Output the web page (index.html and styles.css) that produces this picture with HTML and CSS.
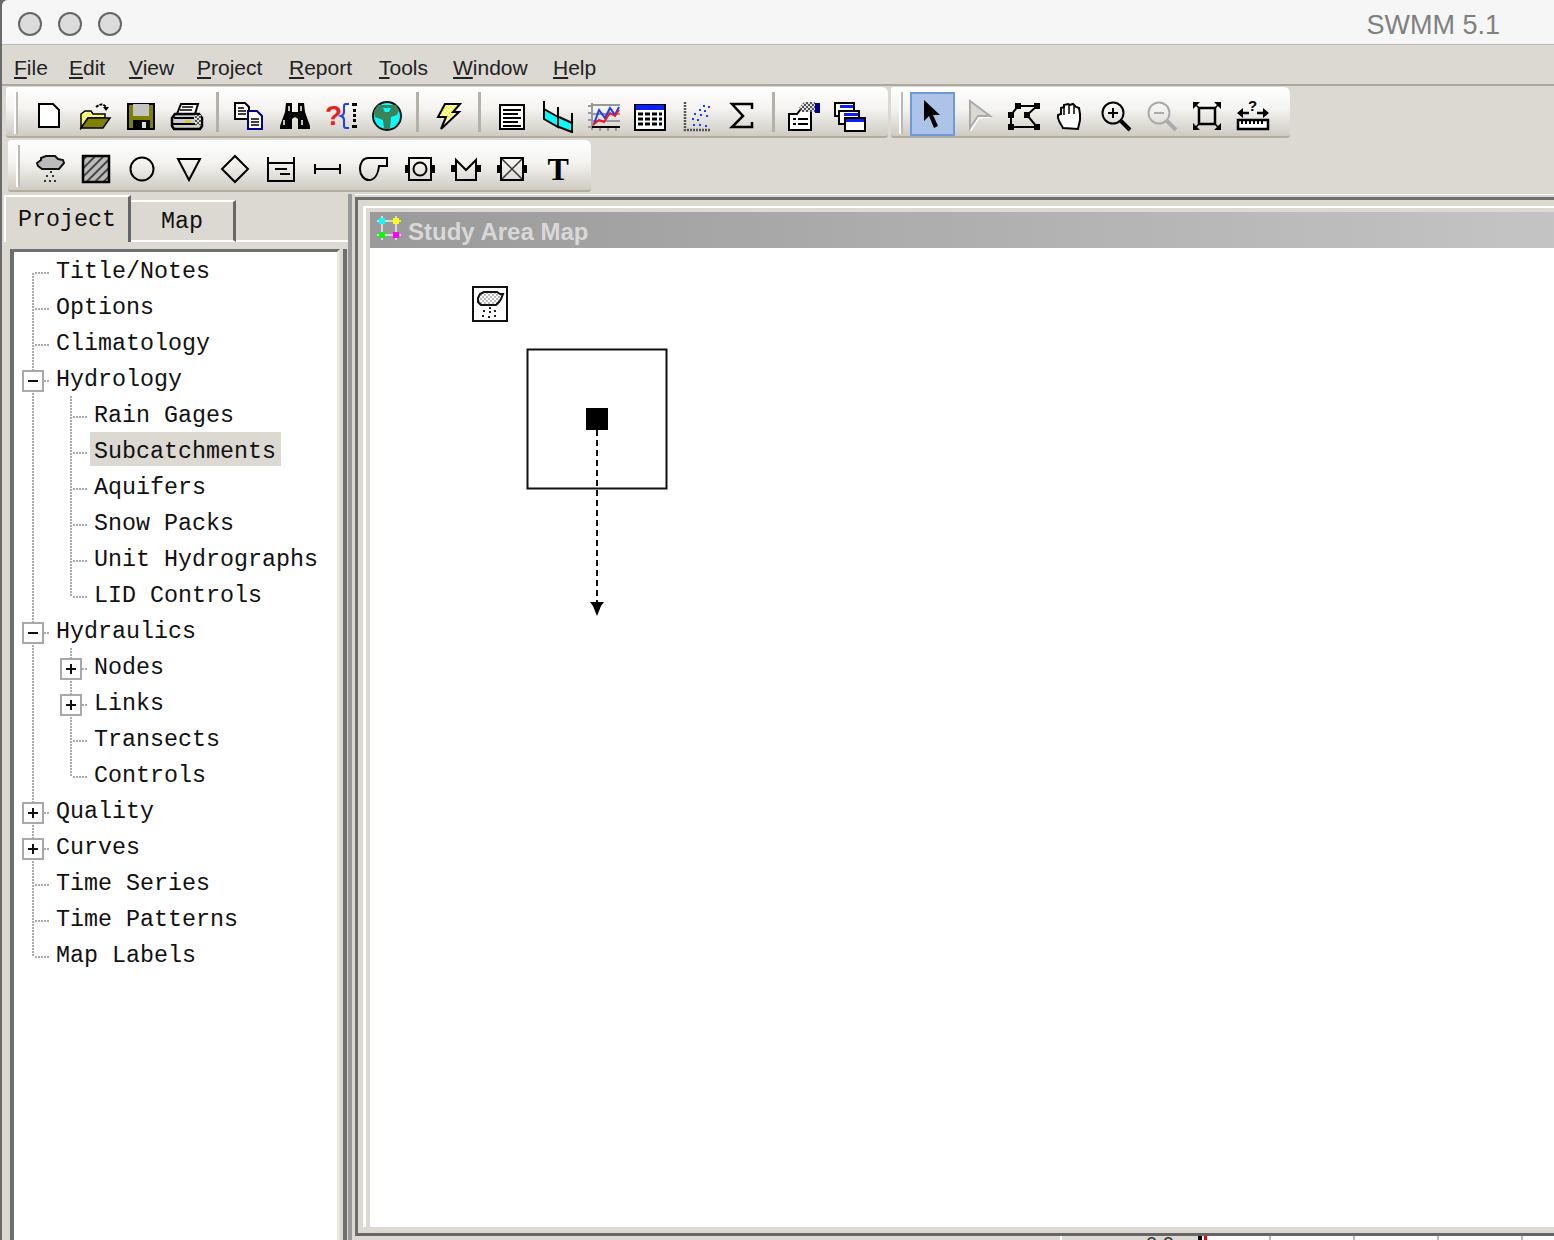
FILE: index.html
```html
<!DOCTYPE html>
<html lang="en">
<head>
  <meta charset="UTF-8" />
  <title>SWMM 5.1</title>
  <link rel="stylesheet" href="styles.css">
</head>
<body>
  <svg class="defs" width="0" height="0">
    <defs>
      <pattern id="dither-yellow" width="4" height="4" patternUnits="userSpaceOnUse">
        <rect width="4" height="4" fill="#fff"/><rect width="2" height="2" fill="#ff0"/><rect x="2" y="2" width="2" height="2" fill="#ff0"/>
      </pattern>
      <pattern id="dither-land" width="4" height="4" patternUnits="userSpaceOnUse">
        <rect width="4" height="4" fill="#12a050"/><rect width="2" height="2" fill="#666"/><rect x="2" y="2" width="2" height="2" fill="#666"/>
      </pattern>
      <pattern id="dither-gray" width="4" height="4" patternUnits="userSpaceOnUse">
        <rect width="4" height="4" fill="#ddd"/><rect width="2" height="2" fill="#555"/><rect x="2" y="2" width="2" height="2" fill="#555"/>
      </pattern>
      <pattern id="hatch" width="6" height="6" patternUnits="userSpaceOnUse" patternTransform="rotate(-45)">
        <rect width="6" height="6" fill="#bbb"/><rect width="6" height="2" fill="#444"/>
      </pattern>
      <pattern id="dots-light" width="4" height="4" patternUnits="userSpaceOnUse">
        <rect width="4" height="4" fill="#fff"/><rect width="2" height="2" fill="#bbb"/><rect x="2" y="2" width="2" height="2" fill="#bbb"/>
      </pattern>
    </defs>
  </svg>

  <div id="window">
    <div class="titlebar">
      <div class="lights">
        <span class="light"></span><span class="light"></span><span class="light"></span>
      </div>
      <div class="app-name">SWMM 5.1</div>
    </div>

    <div class="menubar">
      <span><u>F</u>ile</span>
      <span><u>E</u>dit</span>
      <span><u>V</u>iew</span>
      <span><u>P</u>roject</span>
      <span><u>R</u>eport</span>
      <span><u>T</u>ools</span>
      <span><u>W</u>indow</span>
      <span><u>H</u>elp</span>
    </div>

    <div class="toolbars">
      <div class="toolrow">
        <div class="toolbar">
          <span class="grip"></span>
          <span class="btn"><svg class="ico" viewBox="0 0 32 32"><path d="M7 4h14l6 6v17H7z" fill="#fff" stroke="#000" stroke-width="2"/></svg></span>
          <span class="btn"><svg class="ico" viewBox="0 0 32 32"><path d="M2 28V14l4-3h6l2 3h12v4H9z" fill="url(#dither-yellow)" stroke="#000" stroke-width="1.5"/><path d="M2 28l7-10h22l-7 10z" fill="#808000" stroke="#000" stroke-width="1.5"/><path d="M17 7q6-5 10 0" fill="none" stroke="#000" stroke-width="2" stroke-dasharray="3 1"/><path d="M24 7h6l-3 4z"/></svg></span>
          <span class="btn"><svg class="ico" viewBox="0 0 32 32"><rect x="3" y="4" width="26" height="25" fill="#808000" stroke="#000" stroke-width="2"/><rect x="8" y="4" width="16" height="12" fill="#c4c4c4"/><rect x="8" y="20" width="17" height="9" fill="#000"/><rect x="17" y="22" width="4" height="6" fill="#ddd"/></svg></span>
          <span class="btn"><svg class="ico" viewBox="0 0 32 32"><path d="M10 4h17l-3 10H6z" fill="#fff" stroke="#000" stroke-width="2"/><path d="M11 7h11M9 10h12" stroke="#000" stroke-width="1.5"/><path d="M4 14h24l3 4v8l-2 3H3l-2-3v-8z" fill="#ccc" stroke="#000" stroke-width="2.5"/><path d="M2 24h28M3 18h20" stroke="#000" stroke-width="2"/><rect x="14" y="20.5" width="6" height="2.5" fill="#e8c800"/><rect x="24" y="15" width="6" height="10" fill="url(#dither-gray)"/></svg></span>
          <span class="sep"></span>
          <span class="btn"><svg class="ico" viewBox="0 0 32 32"><path d="M3 3h10l4 4v12H3z" fill="#fff" stroke="#000" stroke-width="2"/><path d="M6 8h6M6 11h8M6 14h8" stroke="#000" stroke-width="1.5"/><path d="M16 11h9l5 5v13H16z" fill="#fff" stroke="#00008b" stroke-width="2"/><path d="M19 19h8M19 22h8M19 25h8" stroke="#000" stroke-width="1.5"/></svg></span>
          <span class="btn"><svg class="ico" viewBox="0 0 32 32"><path d="M7 3h6v9h6V3h6l1 9 5 14v3H19V19l-3-2-3 2v10H1v-3l5-14z"/><path d="M5 20v5M23 20v5M10 6v5M22 6v5" stroke="#fff" stroke-width="1.5"/></svg></span>
          <span class="btn"><svg class="ico" viewBox="0 0 32 32"><text class="ico-q" x="0" y="25">?</text><path d="M24 4h-3q-2 0-2 2v6q0 3-3 4 3 1 3 4v6q0 2 2 2h3" fill="none" stroke="#1a3cff" stroke-width="2"/><path d="M27 3h5v3h-5zM28 9h3v3h-3zM28 14h3v3h-3zM28 19h3v3h-3zM27 25h5v3h-5z"/></svg></span>
          <span class="btn"><svg class="ico" viewBox="0 0 32 32"><circle cx="16" cy="16" r="14" fill="#0ff" stroke="#111" stroke-width="2"/><path d="M7 5h18l3 5-2 5-6 2-1 12h-6l-1-9-8-3-1-6z" fill="url(#dither-land)"/><path d="M12 8h8l-2 4h-4z" fill="#0ff"/></svg></span>
          <span class="sep"></span>
          <span class="btn"><svg class="ico" viewBox="0 0 32 32"><path d="M13 4h15l-7 8h6L9 29l5-12H6z" fill="url(#dither-yellow)" stroke="#000" stroke-width="2"/></svg></span>
          <span class="sep sep-wide"></span>
          <span class="btn"><svg class="ico" viewBox="0 0 32 32"><rect x="5" y="5" width="24" height="24" fill="#fff" stroke="#000" stroke-width="2"/><path d="M8 10h18M8 14h15M8 18h18M8 22h15M8 26h18" stroke="#000" stroke-width="2"/></svg></span>
          <span class="btn"><svg class="ico" viewBox="0 0 32 32"><path d="M2 9v10l14 8V17zM17 17v10l13 6V23z" fill="#0ff"/><path d="M2 1v18l14 8V17L2 9M16 7v20M17 17l13 6M17 27l13 5M30 13v20" fill="none" stroke="#000" stroke-width="2"/></svg></span>
          <span class="btn"><svg class="ico" viewBox="0 0 32 32"><path d="M4 5h28M4 14h28M4 21h28M0 6h4M0 13h4M0 20h4M0 27h4" stroke="#999" stroke-width="2"/><path d="M4 3v27M12 27v4M20 27v4M28 27v4" stroke="#999" stroke-width="2"/><path d="M4 27h28" stroke="#000" stroke-width="2"/><polyline points="6,24 11,10 17,18 22,8 27,15 31,7" fill="none" stroke="#1a3cff" stroke-width="2"/><polyline points="5,25 11,20 16,22 22,13 27,16 31,10" fill="none" stroke="#f01c1c" stroke-width="2"/></svg></span>
          <span class="btn"><svg class="ico" viewBox="0 0 32 32"><rect x="1" y="5" width="30" height="25" fill="#fff" stroke="#000" stroke-width="2"/><rect x="2" y="5" width="28" height="5" fill="#0a1eff"/><path d="M4 14h24M4 19h24M4 24h24" stroke="#000" stroke-width="3" stroke-dasharray="5 2"/></svg></span>
          <span class="btn"><svg class="ico" viewBox="0 0 32 32"><path d="M4 2v28H30" fill="none" stroke="#555" stroke-width="2.5" stroke-dasharray="2 1"/><path d="M12 24h2v2h-2zM18 24h2v2h-2zM24 25h2v2h-2zM11 18h2v2h-2zM16 19h2v2h-2zM13 13h2v2h-2zM19 14h2v2h-2zM25 15h2v2h-2zM18 9h2v2h-2zM23 10h2v2h-2zM22 5h2v2h-2zM27 6h2v2h-2z" fill="#1a3cff"/></svg></span>
          <span class="btn"><svg class="ico" viewBox="0 0 32 32"><path d="M25 9V4H5l11 12L5 27h20v-5" fill="none" stroke="#000" stroke-width="2.5"/></svg></span>
          <span class="sep"></span>
          <span class="btn"><svg class="ico" viewBox="0 0 32 32"><path d="M1 14h8l4-5h10v21H1z" fill="#fff" stroke="#000" stroke-width="2"/><path d="M5 19h3M10 19h10M5 24h3M10 24h10" stroke="#000" stroke-width="2"/><path d="M11 8l5-6h11v10H14z" fill="url(#dither-gray)"/><rect x="27" y="3" width="5" height="10" fill="#00009c"/></svg></span>
          <span class="btn"><svg class="ico" viewBox="0 0 32 32"><rect x="1" y="3" width="19" height="13" fill="#fff" stroke="#000" stroke-width="2"/><rect x="6" y="5" width="13" height="3" fill="#0a1eff"/><rect x="5" y="11" width="20" height="13" fill="#fff" stroke="#000" stroke-width="2"/><rect x="10" y="13" width="14" height="3" fill="#0a1eff"/><rect x="11" y="18" width="20" height="13" fill="#fff" stroke="#000" stroke-width="2"/><rect x="12" y="19" width="18" height="3" fill="#0a1eff"/></svg></span>
        </div>
        <div class="toolbar toolbar-map">
          <span class="grip"></span>
          <span class="btn active"><svg class="ico" viewBox="0 0 32 32"><path d="M7 0v21l5-5 5 12 4-2-5-11h7z"/></svg></span>
          <span class="btn"><svg class="ico" viewBox="0 0 32 32"><path d="M9 3v28l8-13 12-1z" fill="#fff" stroke="#fff" stroke-width="1"/><path d="M8 1v27l8-12h12z" fill="#dcd9d3" stroke="#aaa" stroke-width="2"/></svg></span>
          <span class="btn"><svg class="ico" viewBox="0 0 32 32"><path d="M10 6h19L19 15l10 12H3V15z" fill="none" stroke="#000" stroke-width="2"/><path d="M7 3h6v6H7zM26 3h6v6h-6zM0 12h6v6H0zM16 12h6v6h-6zM0 24h6v6H0zM26 24h6v6h-6z"/></svg></span>
          <span class="btn"><svg class="ico" viewBox="0 0 32 32"><path d="M9 28C7 24 3 20 4 15l3-1V8l3-1V5l4-1 2 1 3-1 3 3 3 1 1 6v6l-2 9z" fill="#fff" stroke="#000" stroke-width="2"/><path d="M10 7v8M15 5v9M20 6v8" stroke="#000" stroke-width="1.5"/></svg></span>
          <span class="btn"><svg class="ico" viewBox="0 0 32 32"><circle cx="13" cy="13" r="10.5" fill="none" stroke="#000" stroke-width="2"/><path d="M8 13h10M13 8v10" stroke="#000" stroke-width="2"/><path d="M21 21l9 9" stroke="#000" stroke-width="4"/></svg></span>
          <span class="btn"><svg class="ico" viewBox="0 0 32 32"><circle cx="13" cy="13" r="10.5" fill="none" stroke="#aaa" stroke-width="2"/><path d="M8 13h10" stroke="#aaa" stroke-width="2"/><path d="M21 21l9 9" stroke="#aaa" stroke-width="4"/></svg></span>
          <span class="btn"><svg class="ico" viewBox="0 0 32 32"><rect x="8" y="8" width="16" height="16" fill="none" stroke="#000" stroke-width="2.5"/><path d="M2 2h7L2 9zM30 2h-7l7 7zM2 30h7l-7-7zM30 30h-7l7-7z"/><path d="M3 3l5 5M29 3l-5 5M3 29l5-5M29 29l-5-5" stroke="#000" stroke-width="1.5"/></svg></span>
          <span class="btn"><svg class="ico" viewBox="0 0 32 32"><text class="ico-q-small" x="11" y="11">?</text><path d="M4 13h8M20 13h8" stroke="#000" stroke-width="2.5"/><path d="M0 13l6-5v10zM32 13l-6-5v10z"/><rect x="1" y="20" width="30" height="9" fill="#fff" stroke="#000" stroke-width="2.5"/><path d="M5 20v4M9 20v4M13 20v4M17 20v4M21 20v4M25 20v4" stroke="#000" stroke-width="2"/></svg></span>
        </div>
      </div>
      <div class="toolrow">
        <div class="toolbar toolbar-second">
          <span class="grip"></span>
          <span class="btn"><svg class="ico" viewBox="0 0 32 32"><path d="M4 13l-1-3 4-3V5l5-2h9l3 3 5 1 1 3-5 6H8z" fill="#bbb" stroke="#111" stroke-width="2"/><path d="M16 18h2v2h-2zM12 22h2v2h-2zM18 22h2v2h-2zM10 27h2v2h-2zM15 27h2v2h-2zM20 27h2v2h-2z" fill="#333"/></svg></span>
          <span class="btn"><svg class="ico" viewBox="0 0 32 32"><rect x="3" y="3" width="26" height="26" fill="url(#hatch)" stroke="#000" stroke-width="2.5"/></svg></span>
          <span class="btn"><svg class="ico" viewBox="0 0 32 32"><circle cx="16" cy="16" r="11.5" fill="none" stroke="#000" stroke-width="2"/></svg></span>
          <span class="btn"><svg class="ico" viewBox="0 0 32 32"><path d="M5 6h22L16 27z" fill="none" stroke="#000" stroke-width="2"/></svg></span>
          <span class="btn"><svg class="ico" viewBox="0 0 32 32"><path d="M16 3l13 13-13 13L3 16z" fill="none" stroke="#000" stroke-width="2"/></svg></span>
          <span class="btn"><svg class="ico" viewBox="0 0 32 32"><path d="M3 4v24h26V4M3 10h26" fill="none" stroke="#000" stroke-width="2"/><path d="M10 16h12M15 21h10" stroke="#000" stroke-width="2"/></svg></span>
          <span class="btn"><svg class="ico" viewBox="0 0 32 32"><path d="M4 16h24M4 11v10M29 11v10" stroke="#000" stroke-width="2"/></svg></span>
          <span class="btn"><svg class="ico" viewBox="0 0 32 32"><path d="M11 5h19v8h-8c-1 9-5 14-10 14-5 0-9-5-9-11S6 5 11 5z" fill="none" stroke="#000" stroke-width="2"/></svg></span>
          <span class="btn"><svg class="ico" viewBox="0 0 32 32"><rect x="5" y="5" width="22" height="22" fill="none" stroke="#000" stroke-width="2"/><circle cx="16" cy="16" r="6.5" fill="none" stroke="#000" stroke-width="2"/><path d="M1 12h4v8H1zM27 12h4v8h-4z"/></svg></span>
          <span class="btn"><svg class="ico" viewBox="0 0 32 32"><path d="M6 7v20h20V7l-10 10z" fill="none" stroke="#000" stroke-width="2"/><path d="M1 12h5v7H1zM26 12h5v7h-5z"/></svg></span>
          <span class="btn"><svg class="ico" viewBox="0 0 32 32"><rect x="5" y="5" width="22" height="22" fill="none" stroke="#000" stroke-width="2"/><path d="M6 6l20 20M26 6L6 26" stroke="#333" stroke-width="1.5"/><path d="M1 12h4v8H1zM27 12h4v8h-4z"/></svg></span>
          <span class="btn btn-text">T</span>
        </div>
      </div>
    </div>

    <div class="main">
      <div class="sidebar">
        <div class="tabs">
          <div class="tab tab-active">Project</div>
          <div class="tab tab-idle">Map</div>
          <div class="tab-fill"></div>
        </div>
        <div class="tree-wrap">
          <div class="tree">
            <div class="row"><span class="cell tee first"></span><span class="label">Title/Notes</span></div>
            <div class="row"><span class="cell tee"></span><span class="label">Options</span></div>
            <div class="row"><span class="cell tee"></span><span class="label">Climatology</span></div>
            <div class="row"><span class="cell tee"><span class="box"></span></span><span class="label">Hydrology</span></div>
            <div class="row"><span class="cell pipe"></span><span class="cell tee"></span><span class="label">Rain Gages</span></div>
            <div class="row"><span class="cell pipe"></span><span class="cell tee"></span><span class="label selected">Subcatchments</span></div>
            <div class="row"><span class="cell pipe"></span><span class="cell tee"></span><span class="label">Aquifers</span></div>
            <div class="row"><span class="cell pipe"></span><span class="cell tee"></span><span class="label">Snow Packs</span></div>
            <div class="row"><span class="cell pipe"></span><span class="cell tee"></span><span class="label">Unit Hydrographs</span></div>
            <div class="row"><span class="cell pipe"></span><span class="cell elbow"></span><span class="label">LID Controls</span></div>
            <div class="row"><span class="cell tee"><span class="box"></span></span><span class="label">Hydraulics</span></div>
            <div class="row"><span class="cell pipe"></span><span class="cell tee"><span class="box plus"></span></span><span class="label">Nodes</span></div>
            <div class="row"><span class="cell pipe"></span><span class="cell tee"><span class="box plus"></span></span><span class="label">Links</span></div>
            <div class="row"><span class="cell pipe"></span><span class="cell tee"></span><span class="label">Transects</span></div>
            <div class="row"><span class="cell pipe"></span><span class="cell elbow"></span><span class="label">Controls</span></div>
            <div class="row"><span class="cell tee"><span class="box plus"></span></span><span class="label">Quality</span></div>
            <div class="row"><span class="cell tee"><span class="box plus"></span></span><span class="label">Curves</span></div>
            <div class="row"><span class="cell tee"></span><span class="label">Time Series</span></div>
            <div class="row"><span class="cell tee"></span><span class="label">Time Patterns</span></div>
            <div class="row"><span class="cell elbow"></span><span class="label">Map Labels</span></div>
          </div>
        </div>
      </div>

      <div class="splitter"></div>

      <div class="workspace">
        <div class="mdi">
          <div class="child">
            <div class="child-title">
              <svg class="child-ico" viewBox="0 0 24 24"><path d="M0 5h24M0 19h24M5 0v24M19 0v24" stroke="#d8d8d8" stroke-width="2"/><rect x="2" y="2" width="6" height="6" fill="#0ff"/><rect x="16" y="2" width="6" height="6" fill="#ff0"/><rect x="2" y="16" width="6" height="6" fill="#0f0"/><rect x="16" y="16" width="6" height="6" fill="#f0f"/></svg>
              <span class="child-name">Study Area Map</span>
            </div>
            <div class="canvas">
              <svg class="map" width="1184" height="980">
                <rect x="103" y="39" width="34" height="34" fill="#fff" stroke="#111" stroke-width="2"/>
                <path d="M108 50l2-4 4-2h13l3 2h3l-2 5-2 3-3 3h-15l-3-3z" fill="url(#dots-light)" stroke="#111" stroke-width="2"/>
                <path d="M119 59h2v2h-2zM113 62h2v2h-2zM119 63h2v2h-2zM124 62h2v2h-2zM112 67h2v2h-2zM118 68h2v2h-2zM124 67h2v2h-2z" fill="#222"/>
                <rect x="157.5" y="101.5" width="139" height="139" fill="none" stroke="#111" stroke-width="2"/>
                <rect x="216" y="160" width="22" height="22" fill="#000"/>
                <path d="M227 182V354" stroke="#111" stroke-width="2" stroke-dasharray="6 4"/>
                <path d="M220 354h14l-3 4-4 10-4-10z" fill="#000"/>
              </svg>
            </div>
          </div>
        </div>
        <div class="status">
          <div class="status-fill"></div>
          <div class="status-scale">0.0</div>
          <div class="status-mark"></div>
          <div class="status-cell status-cell-first"></div>
          <div class="status-cell"></div>
          <div class="status-cell"></div>
          <div class="status-cell"></div>
        </div>
      </div>
    </div>
  </div>
</body>
</html>
```

FILE: styles.css
```css
html, body {
  margin: 0;
  height: 1240px;
  overflow: hidden;
  background-color: #6a6a6a;
}

.defs {
  display: block;
}

#window {
  margin-left: 2px;
  height: 1240px;
  display: flex;
  flex-direction: column;
  background-color: #dcd9d3;
  border-top-left-radius: 6px;
  font-family: "Liberation Sans", Arial, sans-serif;
  color: #222;
  overflow: hidden;
}

.titlebar {
  height: 44px;
  flex: none;
  display: flex;
  align-items: center;
  justify-content: space-between;
  background-color: #f6f6f6;
  border-bottom: 1px solid #b9b9b9;
  padding-left: 16px;
  padding-right: 54px;
}

.lights {
  display: flex;
  gap: 16px;
  margin-top: 4px;
}

.light {
  width: 24px;
  height: 24px;
  box-sizing: border-box;
  border-radius: 50%;
  background-color: #dcdcdc;
  border: 2px solid #666;
}

.app-name {
  font-size: 27px;
  color: #808080;
  margin-top: 6px;
}

.menubar {
  height: 41px;
  flex: none;
  display: grid;
  grid-template-columns: 55px 60px 68px 92px 90px 74px 100px auto;
  align-items: center;
  padding-left: 12px;
  padding-top: 6px;
  box-sizing: border-box;
  font-size: 21px;
  border-bottom: 2px solid #aaa79e;
}

.toolbars {
  flex: none;
  display: flex;
  flex-direction: column;
  gap: 2px;
  padding-top: 1px;
  height: 108px;
  box-sizing: border-box;
}

.toolrow {
  display: flex;
  gap: 3px;
  padding-left: 4px;
}

.toolbar {
  height: 51px;
  box-sizing: border-box;
  display: flex;
  padding: 5px 14px 2px 8px;
  background: linear-gradient(to bottom, #fff 0%, #f4f3f0 45%, #cfcbc3 100%);
  border-bottom: 2px solid #b2ac9e;
  border-radius: 3px 6px 3px 3px;
}

.toolbar-second {
  margin-left: 2px;
  padding-right: 10px;
  height: 52px;
}

.toolbar-second .btn {
  width: 46.2px;
}

.toolbar-map .btn {
  width: 45.8px;
}

.grip {
  width: 4px;
  height: 42px;
  margin-right: 7px;
  background-color: #bdbab3;
  border-left: 2px solid #fff;
  box-sizing: border-box;
}

.btn {
  width: 46.4px;
  height: 44px;
  box-sizing: border-box;
  flex: none;
  padding-top: 8px;
  display: flex;
  justify-content: center;
}

.btn.active {
  background-color: #adc3e8;
  border: 2px solid #6d9ad8;
  padding-top: 6px;
}

.btn-text {
  font-family: "Liberation Serif", "Times New Roman", serif;
  font-weight: bold;
  font-size: 32px;
  line-height: 32px;
  color: #000;
}

.ico {
  width: 32px;
  height: 32px;
  flex: none;
  overflow: visible;
}

.ico-q {
  font-family: "Liberation Sans", Arial, sans-serif;
  font-weight: bold;
  font-size: 28px;
  fill: #f01c1c;
}

.ico-q-small {
  font-family: "Liberation Sans", Arial, sans-serif;
  font-weight: bold;
  font-size: 15px;
  fill: #000;
}

.sep {
  width: 14.5px;
  flex: none;
  height: 40px;
  background: linear-gradient(#b4b1aa, #b4b1aa) center / 3px 100% no-repeat;
}

.sep-wide {
  width: 16.5px;
}

.main {
  flex: 1;
  min-height: 0;
  display: flex;
}

.sidebar {
  width: 346px;
  flex: none;
  box-sizing: border-box;
  display: flex;
  flex-direction: column;
  padding-top: 1px;
}

.tabs {
  display: flex;
  height: 47px;
  flex: none;
  padding-left: 2px;
  font-family: "Liberation Mono", "Courier New", monospace;
  font-size: 23.33px;
  color: #111;
}

.tab {
  box-sizing: border-box;
  text-align: center;
}

.tab-active {
  width: 127px;
  border-left: 2px solid #fff;
  border-top: 2px solid #fff;
  border-right: 3px solid #666;
  line-height: 46px;
}

.tab-idle {
  width: 105px;
  margin-top: 5px;
  border-top: 2px solid #fff;
  border-right: 3px solid #666;
  border-bottom: 2px solid #fff;
  line-height: 40px;
}

.tab-fill {
  flex: 1;
  border-bottom: 2px solid #fff;
}

.tree-wrap {
  flex: 1;
  min-height: 0;
  margin-top: 7px;
  margin-right: 1px;
  padding-left: 8px;
  padding-right: 3px;
  border-right: 4px solid #6e6e6e;
  display: flex;
}

.tree {
  flex: 1;
  box-sizing: border-box;
  background-color: #fff;
  border-top: 3px solid #6e6e6e;
  border-left: 4px solid #6e6e6e;
  border-right: 3px solid #e9e7e2;
  font-family: "Liberation Mono", "Courier New", monospace;
  font-size: 23.33px;
  color: #111;
}

.row {
  height: 36px;
  display: flex;
}

.cell {
  width: 38px;
  height: 36px;
  flex: none;
  display: flex;
  justify-content: center;
  padding-top: 10px;
  box-sizing: border-box;
  background-repeat: no-repeat;
}

.pipe {
  background-image: repeating-linear-gradient(to bottom, #aaa 0 2px, transparent 2px 3px);
  background-size: 2px 100%;
  background-position: 18px 0;
}

.tee {
  background-image:
    repeating-linear-gradient(to bottom, #aaa 0 2px, transparent 2px 3px),
    repeating-linear-gradient(to right, #aaa 0 2px, transparent 2px 3px);
  background-size: 2px 100%, 15px 2px;
  background-position: 18px 0, 21px 20px;
}

.tee.first {
  background-size: 2px 16px, 15px 2px;
  background-position: 18px 21px, 21px 20px;
}

.elbow {
  background-image:
    repeating-linear-gradient(to bottom, #aaa 0 2px, transparent 2px 3px),
    repeating-linear-gradient(to right, #aaa 0 2px, transparent 2px 3px);
  background-size: 2px 21px, 15px 2px;
  background-position: 18px 0, 21px 20px;
}

.box {
  width: 22px;
  height: 22px;
  box-sizing: border-box;
  border: 2px solid #a8a8a8;
  background: linear-gradient(#111, #111) center / 10px 2px no-repeat, #fff;
}

.box.plus {
  background:
    linear-gradient(#111, #111) center / 10px 2px no-repeat,
    linear-gradient(#111, #111) center / 2px 10px no-repeat,
    #fff;
}

.label {
  height: 34px;
  line-height: 40px;
  padding: 0 5px 0 4px;
  white-space: pre;
}

.label.selected {
  background-color: #dcd9d3;
}

.splitter {
  width: 7px;
  flex: none;
  border-left: 4px solid #999;
  box-sizing: border-box;
}

.workspace {
  flex: 1;
  min-width: 0;
  display: flex;
  flex-direction: column;
  border-top: 1px solid #fff;
  padding-top: 2px;
}

.mdi {
  flex: 1;
  min-height: 0;
  display: flex;
  border-top: 3px solid #6e6e6e;
  border-left: 3px solid #6e6e6e;
  border-bottom: 3px solid #666;
  padding: 6px 0 6px 5px;
  box-sizing: border-box;
}

.child {
  flex: 1;
  min-width: 0;
  display: flex;
  flex-direction: column;
  border-left: 3px solid #fff;
  border-top: 2px solid #fff;
  padding-top: 4px;
  padding-left: 4px;
}

.child-title {
  height: 36px;
  flex: none;
  display: flex;
  align-items: center;
  gap: 7px;
  padding-left: 8px;
  font-size: 24px;
  font-weight: bold;
  color: #d8d8d8;
  background: linear-gradient(to right, #9a9a9a 0%, #c4c4c4 100%);
}

.child-name {
  padding-top: 4px;
}

.child-ico {
  width: 24px;
  height: 24px;
  margin-top: -4px;
  margin-left: -1px;
}

.canvas {
  flex: 1;
  min-height: 0;
  background-color: #fff;
  overflow: hidden;
}

.map {
  display: block;
}

.status {
  height: 4px;
  flex: none;
  display: flex;
  overflow: hidden;
  background-color: #fff;
}

.status-fill {
  width: 707px;
  flex: none;
  box-sizing: border-box;
  background-color: #dcd9d3;
  border-right: 2px solid #fff;
}

.status-scale {
  width: 136px;
  flex: none;
  box-sizing: border-box;
  padding-left: 60px;
  background-color: #dcd9d3;
  font-size: 20px;
  line-height: 16px;
  text-align: center;
  color: #333;
}

.status-mark {
  width: 9px;
  flex: none;
  background: linear-gradient(to right, #000 0 44%, #fff 44% 66%, #f00 66% 100%);
}

.status-cell {
  width: 84px;
  flex: none;
  box-sizing: border-box;
  border-right: 2px solid #bbb;
}

.status-cell-first {
  width: 64px;
}
```
